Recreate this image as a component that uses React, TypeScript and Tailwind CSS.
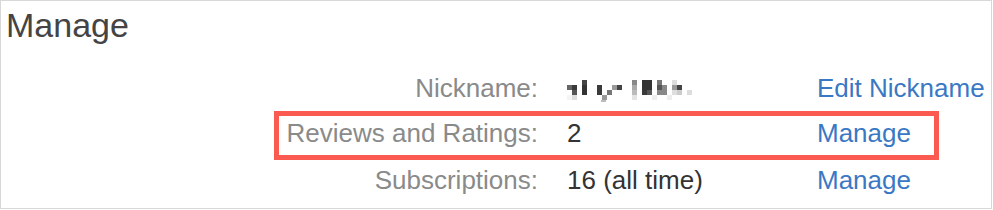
const cells: [number, number, string][] = [
  // [x, y, fill] in 5px cells, origin at mosaic top-left
  [15, 0, "#444"],
  [65, 0, "#888"],
  [75, 0, "#333"],
  [80, 0, "#333"],
  [90, 0, "#777"],
  [105, 0, "#ddd"],
  [0, 5, "#666"],
  [5, 5, "#3a3a3a"],
  [15, 5, "#333"],
  [30, 5, "#3a3a3a"],
  [45, 5, "#999"],
  [50, 5, "#444"],
  [65, 5, "#aaa"],
  [75, 5, "#333"],
  [80, 5, "#333"],
  [90, 5, "#555"],
  [95, 5, "#888"],
  [105, 5, "#999"],
  [110, 5, "#444"],
  [5, 10, "#555"],
  [15, 10, "#333"],
  [30, 10, "#3a3a3a"],
  [40, 10, "#777"],
  [65, 10, "#bbb"],
  [75, 10, "#3a3a3a"],
  [80, 10, "#555"],
  [90, 10, "#888"],
  [95, 10, "#888"],
  [105, 10, "#ddd"],
  [110, 10, "#ccc"],
  [120, 10, "#ddd"],
  [0, 15, "#f4f4f4"],
  [5, 15, "#ddd"],
  [35, 15, "#999"],
  [65, 15, "#e4e4e4"],
  [85, 15, "#eee"],
  [100, 15, "#eee"],
];

function Mosaic() {
  return (
    <svg width="130" height="23" viewBox="0 0 130 23" className="block">
      {cells.map(([x, y, f], i) => (
        <rect key={i} x={x} y={y} width="5" height="5" fill={f} />
      ))}
      <rect x="34" y="20" width="5" height="2" fill="#bbb" />
    </svg>
  );
}

export default function App() {
  return (
    <div
      className="w-[992px] h-[209px] border border-[#d8d8d8] bg-white pt-[4px] pl-[5px]"
      style={{ fontFamily: '"Liberation Sans", Arial, sans-serif' }}
    >
      <h1 className="text-[34px] leading-[40px] text-[#444]">Manage</h1>

      <div className="mt-[20px] ml-[268px] w-[665px] text-[26px]">
        <div className="flex h-[46px] leading-[46px] px-[5px] whitespace-nowrap">
          <div className="w-[259px] shrink-0 text-right text-[#8a8a8a]">Nickname:</div>
          <div className="w-[250px] shrink-0 ml-[29px] pt-[15px]">
            <Mosaic />
          </div>
          <a className="shrink-0 text-[#3b78c4]">Edit Nickname</a>
        </div>

        <div className="flex h-[49px] leading-[34px] border-[5px] border-[#fb5a51] pb-[5px] whitespace-nowrap">
          <div className="w-[259px] shrink-0 text-right text-[#8a8a8a]">Reviews and Ratings:</div>
          <div className="w-[250px] shrink-0 ml-[29px] text-[#333]">2</div>
          <a className="shrink-0 text-[#3b78c4]">Manage</a>
        </div>

        <div className="flex h-[40px] leading-[40px] px-[5px] whitespace-nowrap">
          <div className="w-[259px] shrink-0 text-right text-[#8a8a8a]">Subscriptions:</div>
          <div className="w-[250px] shrink-0 ml-[29px] text-[#333]">16 (all time)</div>
          <a className="shrink-0 text-[#3b78c4]">Manage</a>
        </div>
      </div>
    </div>
  );
}
